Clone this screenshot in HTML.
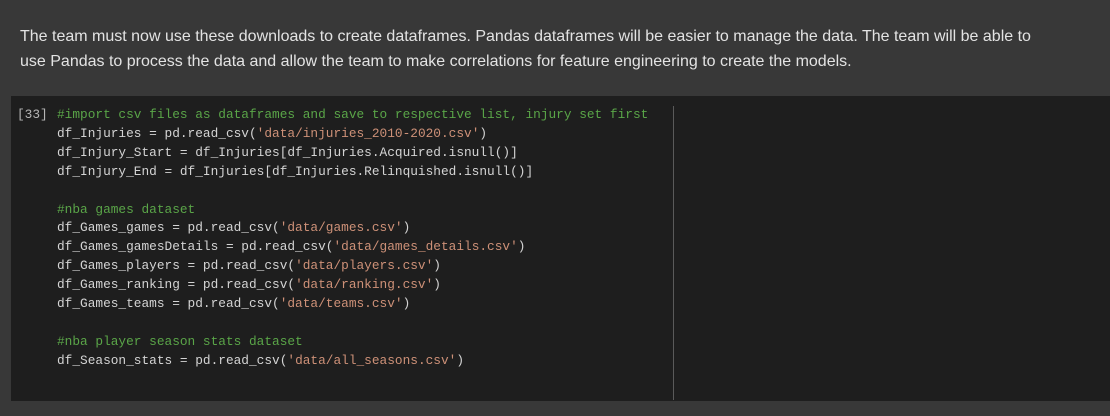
<!DOCTYPE html>
<html><head><style>
html,body{margin:0;padding:0;}
body{width:1110px;height:416px;background:#383838;position:relative;overflow:hidden;font-family:"Liberation Sans",sans-serif;}
.md{position:absolute;left:20px;top:24px;width:1030px;color:#e3e3e3;font-size:16px;line-height:25px;}
.cell{position:absolute;left:11px;top:96px;width:1099px;height:305px;background:#1e1e1e;}
.rule{position:absolute;left:662px;top:10px;width:1px;height:294px;background:#5a5a5a;}
.num{position:absolute;left:6px;top:10px;color:#b5b5b5;font-family:"Liberation Mono",monospace;font-size:12.8px;line-height:18.9px;}
pre{position:absolute;left:46px;top:10px;margin:0;color:#d4d4d4;font-family:"Liberation Mono",monospace;font-size:12.8px;line-height:18.9px;}
.c{color:#5aa548;}
.s{color:#ce9178;}
</style></head><body>
<div class="md">The team must now use these downloads to create dataframes. Pandas dataframes will be easier to manage the data. The team will be able to use Pandas to process the data and allow the team to make correlations for feature engineering to create the models.</div>
<div class="cell">
<div class="num">[33]</div>
<pre><span class="c">#import csv files as dataframes and save to respective list, injury set first</span>
df_Injuries = pd.read_csv(<span class="s">'data/injuries_2010-2020.csv'</span>)
df_Injury_Start = df_Injuries[df_Injuries.Acquired.isnull()]
df_Injury_End = df_Injuries[df_Injuries.Relinquished.isnull()]

<span class="c">#nba games dataset</span>
df_Games_games = pd.read_csv(<span class="s">'data/games.csv'</span>)
df_Games_gamesDetails = pd.read_csv(<span class="s">'data/games_details.csv'</span>)
df_Games_players = pd.read_csv(<span class="s">'data/players.csv'</span>)
df_Games_ranking = pd.read_csv(<span class="s">'data/ranking.csv'</span>)
df_Games_teams = pd.read_csv(<span class="s">'data/teams.csv'</span>)

<span class="c">#nba player season stats dataset</span>
df_Season_stats = pd.read_csv(<span class="s">'data/all_seasons.csv'</span>)</pre>
<div class="rule"></div>
</div>
</body></html>
